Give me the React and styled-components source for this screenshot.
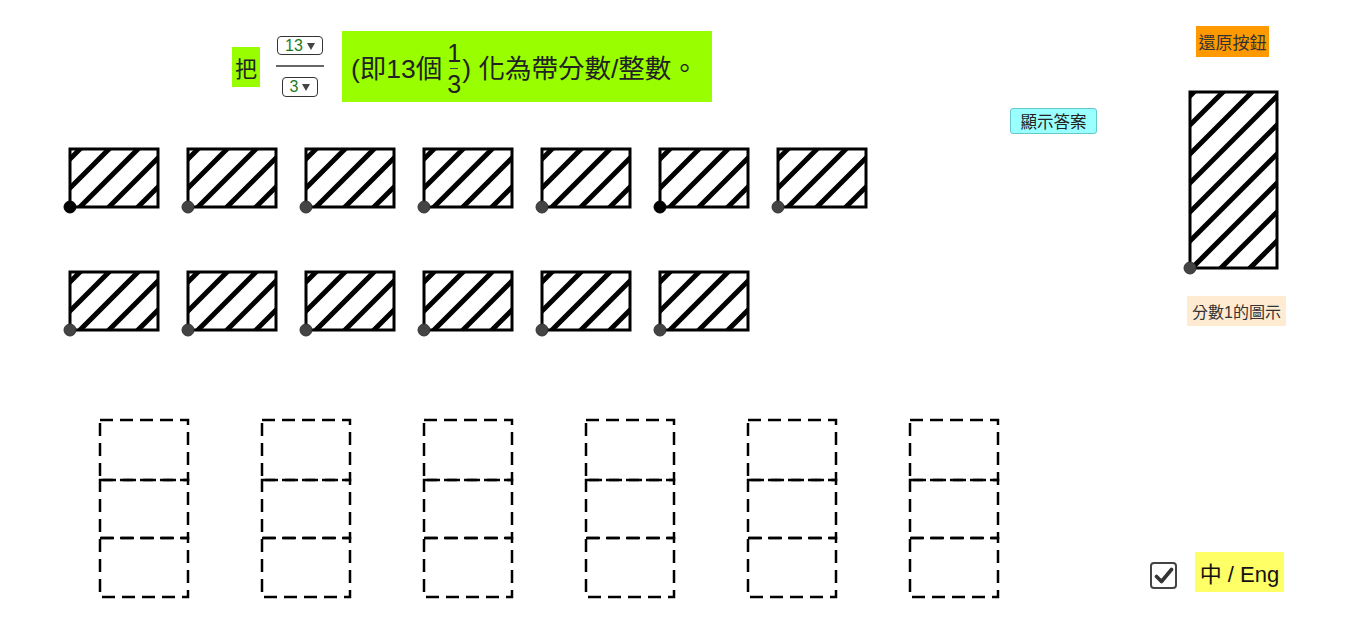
import React, { useId } from "react";
import styled, { createGlobalStyle } from "styled-components";

const GlobalStyle = createGlobalStyle`
  html, body {
    margin: 0;
    padding: 0;
    background: #ffffff;
    font-family: "Liberation Sans", "Noto Sans CJK TC", sans-serif;
  }
`;

const Page = styled.div`
  display: flex;
  width: 1346px;
  height: 639px;
  overflow: hidden;
  background: #ffffff;
`;

const LeftColumn = styled.div`
  width: 1010px;
  box-sizing: border-box;
  padding-left: 62px;
  display: flex;
  flex-direction: column;
`;

const Header = styled.div`
  margin-top: 31px;
  padding-left: 170px;
  display: flex;
  align-items: center;
`;

const Word = styled.div`
  width: 28px;
  height: 40px;
  background: #99ff00;
  color: #222;
  font-size: 22px;
  display: flex;
  align-items: center;
  justify-content: center;
`;

const Fraction = styled.div`
  margin-left: 16px;
  width: 48px;
  display: flex;
  flex-direction: column;
  align-items: center;
`;

const Select = styled.div`
  height: ${(p) => p.$h}px;
  width: ${(p) => p.$w}px;
  box-sizing: border-box;
  border: 1px solid #333;
  border-radius: 4px;
  background: #fff;
  display: flex;
  align-items: center;
  justify-content: center;
  gap: 4px;
  color: #1f7a1f;
  font-size: 16px;
`;

const Caret = styled.span`
  width: 0;
  height: 0;
  border-left: 4.5px solid transparent;
  border-right: 4.5px solid transparent;
  border-top: 7px solid #444;
  margin-top: 1px;
`;

const Bar = styled.div`
  width: 48px;
  height: 2px;
  background: #666;
  margin: 10px 0;
`;

const Statement = styled.div`
  margin-left: 18px;
  height: 71px;
  width: 370px;
  box-sizing: border-box;
  padding-left: 9px;
  background: #99ff00;
  color: #222;
  font-size: 26.5px;
  display: flex;
  align-items: center;
  white-space: nowrap;
`;

const InlineFrac = styled.span`
  display: inline-flex;
  flex-direction: column;
  align-items: center;
  margin: 4px 1px 0 5px;
  font-size: 25px;
  line-height: 27px;
`;

const SmallBar = styled.span`
  width: 8px;
  height: 1px;
  background: #444;
  margin: 1px 0 2px;
`;

const TileRow = styled.div`
  display: flex;
  gap: 14px;
  margin-top: ${(p) => p.$top}px;
`;

const DashedRow = styled.div`
  display: flex;
  gap: 58px;
  margin-left: 31px;
  margin-top: 75px;
`;

const MidColumn = styled.div`
  width: 130px;
  padding-top: 108px;
`;

const ShowButton = styled.div`
  width: 87px;
  height: 26px;
  box-sizing: border-box;
  border: 1px solid #66c8c8;
  border-radius: 3px;
  background: #99ffff;
  color: #222;
  font-size: 16.5px;
  display: flex;
  align-items: center;
  justify-content: center;
`;

const RightColumn = styled.div`
  width: 206px;
  display: flex;
  flex-direction: column;
  align-items: flex-start;
`;

const ResetButton = styled.div`
  margin-top: 26px;
  margin-left: 56px;
  width: 73px;
  height: 31px;
  background: #ff9900;
  color: #333;
  font-size: 17px;
  display: flex;
  align-items: center;
  justify-content: center;
`;

const BigShape = styled.div`
  margin-top: 27px;
  margin-left: 42px;
  line-height: 0;
`;

const Caption = styled.div`
  margin-top: 20px;
  margin-left: 47px;
  width: 99px;
  height: 30px;
  background: #ffebd2;
  color: #333;
  font-size: 16px;
  display: flex;
  align-items: center;
  justify-content: center;
`;

const LangRow = styled.div`
  margin-top: 226px;
  margin-left: 10px;
  display: flex;
  align-items: center;
  gap: 18px;
`;

const CheckBox = styled.div`
  width: 27px;
  height: 27px;
  box-sizing: border-box;
  border: 2px solid #444;
  border-radius: 4px;
  background: #fff;
  display: flex;
  align-items: center;
  justify-content: center;
  margin-top: 7px;
`;

const LangLabel = styled.div`
  width: 89px;
  height: 40px;
  background: #ffff66;
  color: #111;
  font-size: 22px;
  display: flex;
  align-items: center;
  justify-content: center;
`;

const HatchedRect = ({ w, h, dot, phase = 10 }) => {
  const id = useId().replace(/:/g, "");
  const lines = [];
  for (let c = 16 + phase - 29 * 8; c < 16 + w + h + 29; c += 29) {
    if (c < 0) continue;
    lines.push(
      <line key={c} x1={c - 300} y1={300} x2={c + 300} y2={-300} stroke="#000" strokeWidth="5" />
    );
  }
  return (
    <svg width={w + 16} height={h + 16} style={{ display: "block" }}>
      <defs>
        <clipPath id={id}>
          <rect x="8" y="8" width={w} height={h} />
        </clipPath>
      </defs>
      <g clipPath={`url(#${id})`}>{lines}</g>
      <rect x="8" y="8" width={w} height={h} fill="none" stroke="#000" strokeWidth="3" />
      <circle cx="8" cy={8 + h} r="6" fill={dot} stroke={dot === "#000" ? "#000" : "#333"} strokeWidth="1" />
    </svg>
  );
};

const DashedStack = () => (
  <svg width="104" height="190" style={{ display: "block" }}>
    {[
      [7, 60],
      [67, 58],
      [125, 59],
    ].map(([y, h]) => (
      <rect key={y} x="7" y={y} width="88" height={h} fill="none" stroke="#000" strokeWidth="2.5" strokeDasharray="13 7" />
    ))}
  </svg>
);

const rowOne = ["#000", "#444", "#444", "#444", "#444", "#000", "#444"];
const rowTwo = ["#444", "#444", "#444", "#444", "#444", "#444"];

export default function App() {
  return (
    <>
      <GlobalStyle />
      <Page>
        <LeftColumn>
          <Header>
            <Word>把</Word>
            <Fraction>
              <Select $w={46} $h={19}>
                13 <Caret />
              </Select>
              <Bar />
              <Select $w={36} $h={20}>
                3 <Caret />
              </Select>
            </Fraction>
            <Statement>
              (即13個
              <InlineFrac>
                <span>1</span>
                <SmallBar />
                <span>3</span>
              </InlineFrac>
              ) 化為帶分數/整數。
            </Statement>
          </Header>
          <TileRow $top={39}>
            {rowOne.map((d, i) => (
              <HatchedRect key={i} w={88} h={58} dot={d} />
            ))}
          </TileRow>
          <TileRow $top={49}>
            {rowTwo.map((d, i) => (
              <HatchedRect key={i} w={88} h={58} dot={d} />
            ))}
          </TileRow>
          <DashedRow>
            {[0, 1, 2, 3, 4, 5].map((i) => (
              <DashedStack key={i} />
            ))}
          </DashedRow>
        </LeftColumn>
        <MidColumn>
          <ShowButton>顯示答案</ShowButton>
        </MidColumn>
        <RightColumn>
          <ResetButton>還原按鈕</ResetButton>
          <BigShape>
            <HatchedRect w={87} h={176} dot="#444" phase={4} />
          </BigShape>
          <Caption>分數1的圖示</Caption>
          <LangRow>
            <CheckBox>
              <svg width="20" height="18" viewBox="0 0 20 18">
                <path d="M2.5 9.5 L7.5 14.5 L17.5 2.5" fill="none" stroke="#333" strokeWidth="3.6" strokeLinecap="round" strokeLinejoin="round" />
              </svg>
            </CheckBox>
            <LangLabel>中 / Eng</LangLabel>
          </LangRow>
        </RightColumn>
      </Page>
    </>
  );
}
